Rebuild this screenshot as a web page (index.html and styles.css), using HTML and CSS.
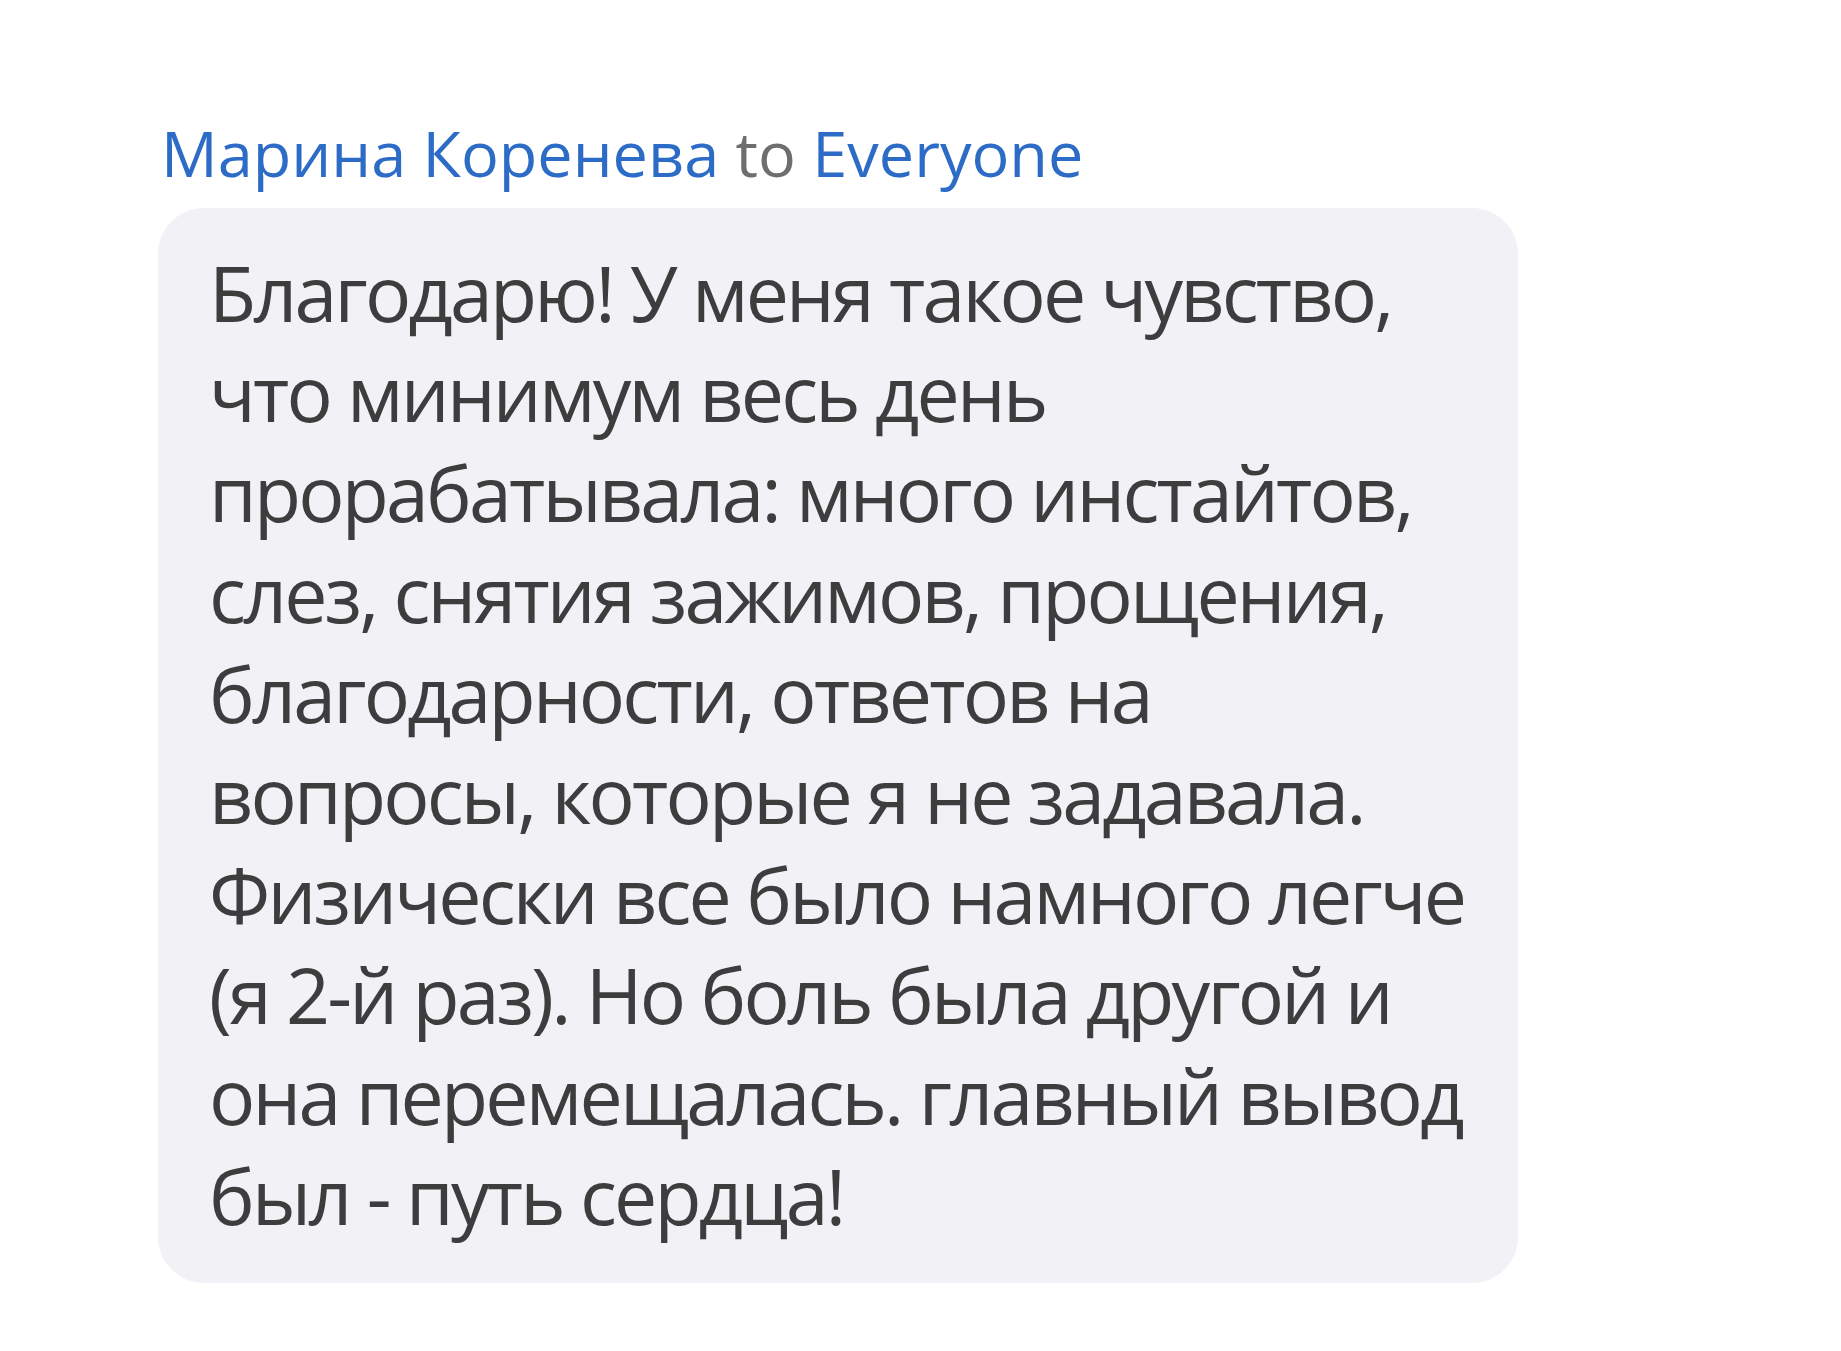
FILE: index.html
```html
<!DOCTYPE html>
<html lang="ru">
<head>
<meta charset="utf-8">
<link rel="stylesheet" href="styles.css">
</head>
<body>
<div class="chat">
  <div class="msg-head"><span class="name">Марина Коренева</span> <span class="to">to</span> <span class="name">Everyone</span></div>
  <div class="bubble">Благодарю! У меня такое чувство,<br>что минимум весь день<br>прорабатывала: много инстайтов,<br>слез, снятия зажимов, прощения,<br>благодарности, ответов на<br>вопросы, которые я не задавала.<br>Физически все было намного легче<br>(я 2-й раз). Но боль была другой и<br>она перемещалась. главный вывод<br>был - путь сердца!</div>
</div>
</body>
</html>
```
FILE: styles.css
```css
html, body {
  margin: 0;
  background: #ffffff;
}
.chat {
  padding: 115px 0 0 158px;
  font-family: "Open Sans", "Noto Sans", sans-serif;
}
.msg-head {
  font-size: 63px;
  line-height: 1.2;
  padding-left: 3px;
  margin-bottom: 17px;
  white-space: nowrap;
}
.name { color: #2d6cc6; }
.to { color: #6e6e6e; }
.bubble {
  width: 1258px;
  padding: 35px 51px 36px 51px;
  background: #f1f1f6;
  border-radius: 46px;
  color: #3d3d3d;
  font-size: 77px;
  line-height: 100.4px;
  letter-spacing: -2.8px;
  white-space: nowrap;
}
```
